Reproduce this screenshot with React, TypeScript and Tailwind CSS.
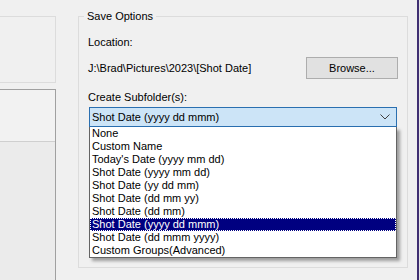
const options = [
  "None",
  "Custom Name",
  "Today's Date (yyyy mm dd)",
  "Shot Date (yyyy mm dd)",
  "Shot Date (yy dd mm)",
  "Shot Date (dd mm yy)",
  "Shot Date (dd mm)",
  "Shot Date (yyyy dd mmm)",
  "Shot Date (dd mmm yyyy)",
  "Custom Groups(Advanced)",
];

const selected = 7;

export default function App() {
  return (
    <div className="flex w-[420px] h-[280px] overflow-hidden bg-[#f0f0f0] text-[11px] leading-[15px] text-black font-['Liberation_Sans',Arial,sans-serif]">
      {/* Left panels */}
      <div className="flex flex-col w-[56px] shrink-0">
        <div className="mt-[16px] h-[67px] border-y border-r border-[#dcdcdc]" />
        <div className="mt-[6px] flex flex-col flex-1 border-t border-r border-[#a0a0a0]">
          <div className="h-[52px] bg-[#f2f2f2] border-b border-[#cfcfcf]" />
          <div className="flex-1 bg-[#ebebeb]" />
        </div>
      </div>

      <div className="w-[22px] shrink-0" />

      {/* Save Options group */}
      <div className="relative mt-[16px] w-[330px] h-[252px] shrink-0 border border-[#dcdcdc] pl-[9px] pr-[9px] pt-[18px]">
        <span className="absolute left-[5px] top-[-8px] bg-[#f0f0f0] px-[3px]">Save Options</span>

        <div>Location:</div>

        <div className="mt-[7px] flex items-center justify-between h-[22px]">
          <span>J:\Brad\Pictures\2023\[Shot Date]</span>
          <button className="w-[92px] h-[22px] border border-[#adadad] bg-[#e1e1e1] text-center">
            Browse...
          </button>
        </div>

        <div className="mt-[11px]">Create Subfolder(s):</div>

        <div className="ml-[1px] mt-[2px] w-[308px]">
          <div className="flex items-center justify-between h-[20px] border border-[#2a6fb0] bg-[#cce4f7] pl-[2px] pr-[6px]">
            <span>Shot Date (yyyy dd mmm)</span>
            <svg width="10" height="6" viewBox="0 0 10 6" fill="none">
              <path d="M0.5 0.5 L5 5 L9.5 0.5" stroke="#404040" strokeWidth="1" />
            </svg>
          </div>
          <div className="bg-white border-x border-b border-[#646464] shadow-[3px_3px_3px_rgba(0,0,0,0.35)]">
            {options.map((o, i) => (
              <div
                key={o}
                className={
                  i === selected
                    ? "h-[13px] leading-[13px] pl-[2px] bg-[#000080] text-white outline-1 outline-dotted outline-white -outline-offset-1"
                    : "h-[13px] leading-[13px] pl-[2px]"
                }
              >
                {o}
              </div>
            ))}
          </div>
        </div>
      </div>

      {/* Right edge */}
      <div className="w-[9px] shrink-0" />
      <div className="w-[2px] shrink-0 bg-[#3f2f72]" />
      <div className="w-[1px] shrink-0 bg-[#e6e6e6]" />
    </div>
  );
}
